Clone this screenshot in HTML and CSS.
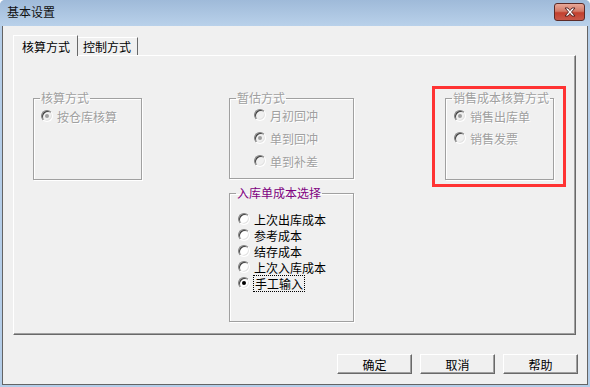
FILE: index.html
```html
<!DOCTYPE html>
<html lang="zh-CN">
<head>
    <meta charset="UTF-8">
    <title>基本设置</title>
    <link rel="stylesheet" href="styles.css">
</head>
<body>
    <div class="window">
        <!-- 标题栏 -->
        <div class="titlebar">
            <span class="title">基本设置</span>
            <span class="close-btn">
                <svg width="14" height="10" viewBox="0 0 14 10">
                    <path d="M2 1 L5 1 L7 3.5 L9 1 L12 1 L8.5 5 L12 9 L9 9 L7 6.5 L5 9 L2 9 L5.5 5 Z"
                          fill="#fff" stroke="#4a1a1a" stroke-width="0.9" stroke-linejoin="round"/>
                </svg>
            </span>
        </div>

        <div class="client">
            <div class="tabs">
                <div class="tab tab-active">核算方式</div>
                <div class="tab">控制方式</div>
            </div>

            <div class="tab-panel">
                <fieldset class="group group-calc disabled">
                    <legend>核算方式</legend>
                    <div class="options">
                        <label class="option"><span class="radio checked"></span>按仓库核算</label>
                    </div>
                </fieldset>

                <div class="column">
                    <fieldset class="group group-est disabled">
                        <legend>暂估方式</legend>
                        <div class="options">
                            <label class="option"><span class="radio"></span>月初回冲</label>
                            <label class="option"><span class="radio checked"></span>单到回冲</label>
                            <label class="option"><span class="radio"></span>单到补差</label>
                        </div>
                    </fieldset>

                    <fieldset class="group group-cost">
                        <legend>入库单成本选择</legend>
                        <div class="options">
                            <label class="option"><span class="radio"></span>上次出库成本</label>
                            <label class="option"><span class="radio"></span>参考成本</label>
                            <label class="option"><span class="radio"></span>结存成本</label>
                            <label class="option"><span class="radio"></span>上次入库成本</label>
                            <label class="option"><span class="radio checked"></span><span class="focus">手工输入</span></label>
                        </div>
                    </fieldset>
                </div>

                <fieldset class="group group-sale disabled">
                    <legend>销售成本核算方式</legend>
                    <div class="options">
                        <label class="option"><span class="radio checked"></span>销售出库单</label>
                        <label class="option"><span class="radio"></span>销售发票</label>
                    </div>
                </fieldset>
            </div>

            <div class="buttons">
                <button class="btn">确定</button>
                <button class="btn">取消</button>
                <button class="btn">帮助</button>
            </div>
        </div>
    </div>

    <!-- 标注框 -->
    <div class="highlight"></div>
</body>
</html>
```

FILE: styles.css
```css
body {
    margin: 0;
    width: 590px;
    height: 387px;
    overflow: hidden;
    font-family: "Noto Sans CJK SC", "Liberation Sans", sans-serif;
    font-size: 12px;
    color: #000;
}

.window {
    width: 590px;
    height: 387px;
    box-sizing: border-box;
    padding: 0 2px 2px;
    background: #b4cde8;
    border-radius: 5px 5px 0 0;
}

.titlebar {
    height: 26px;
    margin: 0 -2px;
    padding: 0 5px 0 7px;
    display: flex;
    align-items: center;
    justify-content: space-between;
    background: linear-gradient(#9fbad9, #b9d1ea);
    border-radius: 5px 5px 0 0;
}

.title {
    color: #111;
    line-height: 14px;
    margin-top: -2px;
}

.close-btn {
    width: 29px;
    height: 16px;
    margin-top: -3px;
    border: 1px solid #5c2a26;
    border-radius: 3px;
    background: linear-gradient(#e8a898 0%, #d37a68 45%, #c2402e 55%, #c8584a 100%);
    display: flex;
    align-items: center;
    justify-content: center;
}

.client {
    height: 359px;
    box-sizing: border-box;
    border: 1px solid #646464;
    border-top: none;
    background: #f0f0f0;
    padding: 9px 0 0 10px;
}

/* 选项卡 */
.tabs {
    display: flex;
    align-items: flex-end;
    height: 20px;
}

.tab {
    height: 18px;
    box-sizing: border-box;
    padding: 0 6px 0 5px;
    border-top: 1px solid #fff;
    border-right: 1px solid #696969;
    line-height: 17px;
    color: #000;
}

.tab-active {
    position: relative;
    z-index: 1;
    height: 21px;
    margin-bottom: -1px;
    padding: 0 7px 0 8px;
    border-left: 1px solid #fff;
    background: #f0f0f0;
    line-height: 21px;
}

.tab-panel {
    width: 563px;
    height: 280px;
    box-sizing: border-box;
    border: 1px solid #fff;
    border-right-color: #696969;
    border-bottom-color: #696969;
    box-shadow: inset -1px -1px 0 #a0a0a0;
    padding: 35px 0 0 19px;
    display: flex;
    align-items: flex-start;
}

/* 分组框 */
.group {
    margin: 0;
    padding: 0;
    min-inline-size: 0;
    box-sizing: border-box;
    border: 1px solid #a0a0a0;
    box-shadow: 1px 1px 0 #fff, inset 1px 1px 0 #fff;
}

.group legend {
    padding: 0 1px;
    margin-left: 6px;
    line-height: 14px;
}

.disabled legend,
.disabled .option {
    color: #a0a0a0;
    text-shadow: 1px 1px 0 #fff;
}

.group-cost legend {
    color: #800080;
}

.options {
    display: flex;
    flex-direction: column;
}

.option {
    display: flex;
    align-items: center;
    height: 16px;
    white-space: nowrap;
}

.group-calc {
    width: 109px;
    height: 89px;
}

.group-calc .options {
    padding: 3px 0 0 7px;
}

.column {
    margin-left: 87px;
    display: flex;
    flex-direction: column;
}

.group-est {
    width: 125px;
    height: 88px;
}

.group-est .options {
    padding: 2px 0 0 24px;
    gap: 7px;
}

.group-cost {
    width: 125px;
    height: 136px;
    margin-top: 7px;
}

.group-cost .options {
    padding: 11px 0 0 8px;
}

.group-sale {
    width: 109px;
    height: 89px;
    margin-left: 91px;
}

.group-sale .options {
    padding: 3px 0 0 8px;
    gap: 6px;
}

/* 单选框 */
.radio {
    position: relative;
    width: 12px;
    height: 12px;
    box-sizing: border-box;
    margin-right: 4px;
    flex: none;
    border-radius: 50%;
    border: 1px solid;
    border-color: #808080 #fff #fff #808080;
    box-shadow: inset 1px 1px 0 #404040, inset -1px -1px 0 #e3e3e3;
    background: #fff;
}

.disabled .radio {
    background: #f0f0f0;
}

.radio.checked::after {
    content: "";
    position: absolute;
    left: 3px;
    top: 3px;
    width: 4px;
    height: 4px;
    border-radius: 50%;
    background: #000;
}

.disabled .radio.checked::after {
    background: #a0a0a0;
}

.focus {
    outline: 1px dotted #000;
    outline-offset: 0;
    padding: 0 1px;
    line-height: 15px;
}

/* 按钮 */
.buttons {
    display: flex;
    justify-content: flex-end;
    gap: 8px;
    padding: 19px 9px 0 0;
}

.btn {
    width: 75px;
    height: 20px;
    padding: 0;
    font: inherit;
    color: #000;
    background: #f0f0f0;
    border: 1px solid;
    border-color: #fff #696969 #696969 #fff;
    box-shadow: inset -1px -1px 0 #a0a0a0;
    border-radius: 0;
}

.highlight {
    position: absolute;
    left: 432px;
    top: 86px;
    width: 134px;
    height: 101px;
    box-sizing: border-box;
    border: 3px solid #ff3333;
}
```
